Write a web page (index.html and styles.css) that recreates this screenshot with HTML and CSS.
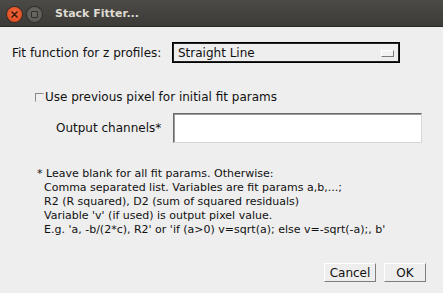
FILE: index.html
```html
<!DOCTYPE html>
<html>
<head>
<meta charset="utf-8">
<link rel="stylesheet" href="styles.css">
</head>
<body>
<div class="window">
  <div class="titlebar">
    <span class="wbtn close"><svg width="15" height="15" viewBox="0 0 15 15"><path d="M5 5 L10 10 M10 5 L5 10" stroke="#3a1a10" stroke-width="1.6" stroke-linecap="round"/></svg></span>
    <span class="wbtn other"><span class="sq"></span></span>
    <span class="title">Stack Fitter...</span>
  </div>
  <div class="content">
    <div class="row fit">
      <span class="label">Fit function for z profiles:</span>
      <div class="choice"><span>Straight Line</span><span class="knob"></span></div>
    </div>
    <div class="row check">
      <span class="box"></span><span class="clabel">Use previous pixel for initial fit params</span>
    </div>
    <div class="row output">
      <span class="label">Output channels*</span>
      <div class="field"></div>
    </div>
    <div class="note">
      <div class="l1">*&nbsp;Leave blank for all fit params. Otherwise:</div>
      <div class="ln">Comma separated list. Variables are fit params a,b,...;</div>
      <div class="ln">R2 (R squared), D2 (sum of squared residuals)</div>
      <div class="ln">Variable 'v' (if used) is output pixel value.</div>
      <div class="ln">E.g. 'a, -b/(2*c), R2' or 'if (a&gt;0) v=sqrt(a); else v=-sqrt(-a);, b'</div>
    </div>
    <div class="buttons">
      <span class="btn cancel">Cancel</span>
      <span class="btn ok">OK</span>
    </div>
  </div>
</div>
</body>
</html>
```
FILE: styles.css
```css
html, body { margin: 0; padding: 0; }
body { width: 443px; height: 293px; overflow: hidden; background: #eeeeee; font-family: "DejaVu Sans", sans-serif; font-size: 12px; color: #111; }
.window { width: 443px; height: 293px; display: flex; flex-direction: column; }
.titlebar { height: 27px; flex: none; background: linear-gradient(#4b4a46, #3c3b37); display: flex; align-items: center; padding-left: 7px; box-sizing: border-box; border-bottom: 1px solid #2c2b28; }
.wbtn { width: 15px; height: 15px; border-radius: 50%; display: inline-flex; align-items: center; justify-content: center; margin-top: 2px; }
.close { background: radial-gradient(circle at 50% 40%, #f2683a, #d9461a); box-shadow: 0 0 0 1px #3a2a22; }
.other { margin-left: 5px; background: radial-gradient(circle at 50% 40%, #6a6964, #56554f); box-shadow: 0 0 0 1px #2f2e2a; }
.sq { width: 5px; height: 5px; border: 1px solid #2e2d29; border-radius: 1px; }
.title { margin-left: 13px; margin-top: 1px; font-family: "DejaVu Sans", sans-serif; font-weight: bold; font-size: 11px; color: #dfdbd2; }
.content { flex: 1; position: relative; }
.row { display: flex; align-items: center; }
.fit { margin-top: 15px; padding-left: 12px; height: 21px; }
.fit .label { width: 160px; }
.choice { width: 228px; height: 21px; box-sizing: border-box; border: 1px solid #000; box-shadow: inset 0 0 0 1px #222; display: flex; align-items: center; justify-content: space-between; padding: 0 5px 0 5px; }
.knob { width: 11px; height: 5px; background: #f2f2f2; border: 1px solid; border-color: #ffffff #7a7a7a #7a7a7a #ffffff; margin-top: 2px; }
.check { margin-top: 27px; padding-left: 35px; height: 14px; }
.box { width: 7px; height: 7px; border: 1px solid; border-color: #8a8a8a #e8e8e8 #e8e8e8 #8a8a8a; background: #f0f0f0; }
.clabel { margin-left: 1px; }
.output { margin-top: 9px; padding-left: 56px; height: 30px; }
.output .label { width: 117px; }
.field { width: 249px; height: 30px; box-sizing: border-box; background: #fff; border: 1px solid; border-color: #6a6a6a #d6d6d6 #d6d6d6 #6a6a6a; box-shadow: inset 1px 1px 0 #9a9a9a; }
.note { margin-top: 24px; padding-left: 37px; font-size: 11px; line-height: 14px; }
.note .ln { padding-left: 7px; }
.buttons { position: absolute; right: 17px; bottom: 11px; display: flex; gap: 8px; }
.btn { height: 19px; box-sizing: border-box; border: 1px solid; border-color: #ffffff #7f7f7f #7f7f7f #ffffff; display: flex; align-items: center; justify-content: center; font-size: 12px; background: #eeeeee; }
.cancel { width: 52px; }
.ok { width: 42px; }
```
